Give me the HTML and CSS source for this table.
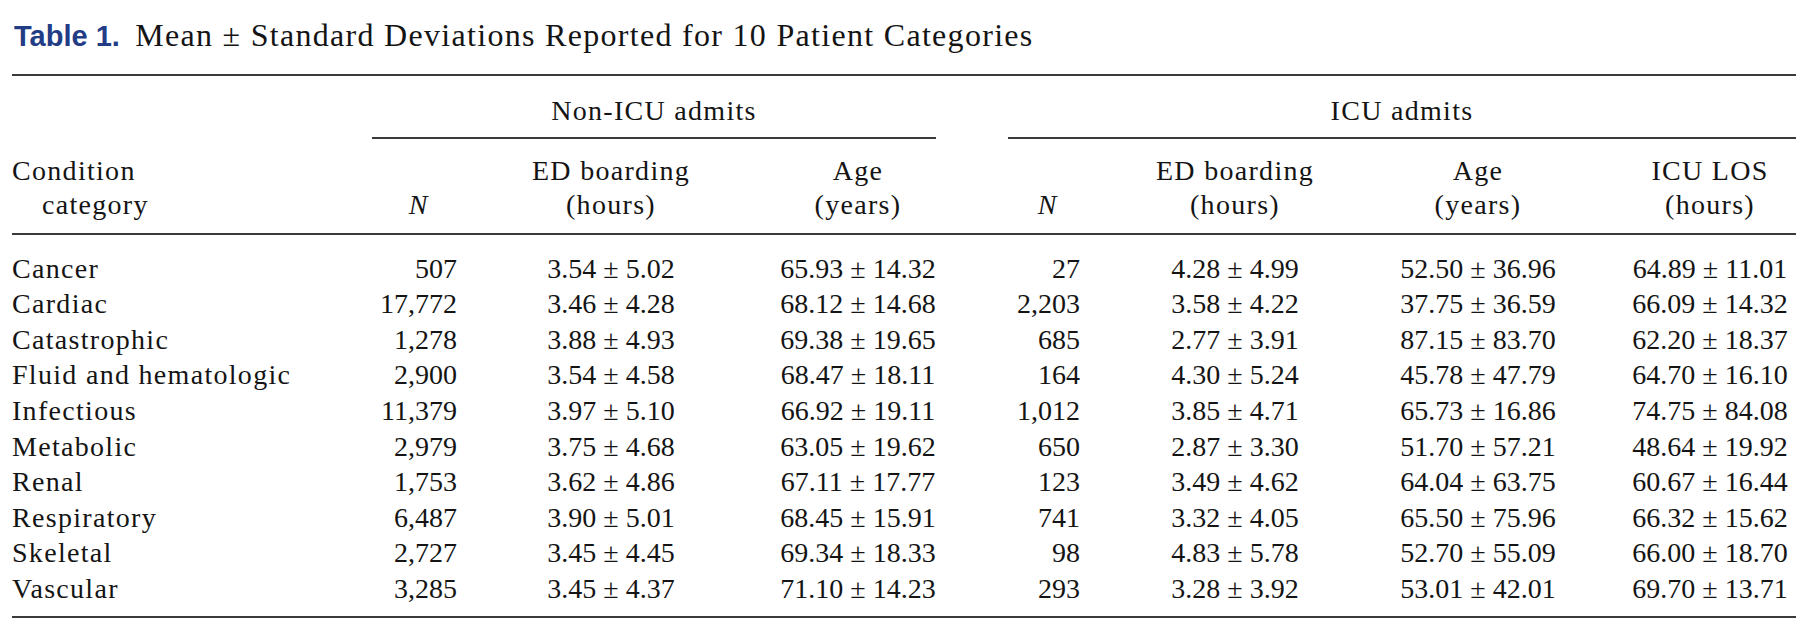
FILE: index.html
```html
<!DOCTYPE html>
<html lang="en">
<head>
<meta charset="utf-8">
<title>Table 1</title>
<link rel="stylesheet" href="styles.css">
</head>
<body>
<div class="page">
  <h1 class="caption"><span class="caption-label">Table 1.</span> Mean ± Standard Deviations Reported for 10 Patient Categories</h1>
  <table class="stats">
    <colgroup>
      <col class="w-label">
      <col class="w-n1">
      <col class="w-ed1">
      <col class="w-age1">
      <col class="w-gap">
      <col class="w-n2">
      <col class="w-ed2">
      <col class="w-age2">
      <col class="w-los">
    </colgroup>
    <thead>
      <tr class="group-row">
        <th class="blank"></th>
        <th class="group" colspan="3">Non-ICU admits</th>
        <th class="blank"></th>
        <th class="group" colspan="4">ICU admits</th>
      </tr>
      <tr class="head-row">
        <th class="label head-label">Condition<br>category</th>
        <th class="head-n"><i>N</i></th>
        <th class="ed1">ED boarding<br>(hours)</th>
        <th>Age<br>(years)</th>
        <th></th>
        <th class="head-n"><i>N</i></th>
        <th>ED boarding<br>(hours)</th>
        <th class="age2">Age<br>(years)</th>
        <th>ICU LOS<br>(hours)</th>
      </tr>
    </thead>
    <tbody>
      <tr><td class="label">Cancer</td><td class="n1">507</td><td class="ed1">3.54 ± 5.02</td><td>65.93 ± 14.32</td><td></td><td class="n2">27</td><td>4.28 ± 4.99</td><td class="age2">52.50 ± 36.96</td><td>64.89 ± 11.01</td></tr>
      <tr><td class="label">Cardiac</td><td class="n1">17,772</td><td class="ed1">3.46 ± 4.28</td><td>68.12 ± 14.68</td><td></td><td class="n2">2,203</td><td>3.58 ± 4.22</td><td class="age2">37.75 ± 36.59</td><td>66.09 ± 14.32</td></tr>
      <tr><td class="label">Catastrophic</td><td class="n1">1,278</td><td class="ed1">3.88 ± 4.93</td><td>69.38 ± 19.65</td><td></td><td class="n2">685</td><td>2.77 ± 3.91</td><td class="age2">87.15 ± 83.70</td><td>62.20 ± 18.37</td></tr>
      <tr><td class="label">Fluid and hematologic</td><td class="n1">2,900</td><td class="ed1">3.54 ± 4.58</td><td>68.47 ± 18.11</td><td></td><td class="n2">164</td><td>4.30 ± 5.24</td><td class="age2">45.78 ± 47.79</td><td>64.70 ± 16.10</td></tr>
      <tr><td class="label">Infectious</td><td class="n1">11,379</td><td class="ed1">3.97 ± 5.10</td><td>66.92 ± 19.11</td><td></td><td class="n2">1,012</td><td>3.85 ± 4.71</td><td class="age2">65.73 ± 16.86</td><td>74.75 ± 84.08</td></tr>
      <tr><td class="label">Metabolic</td><td class="n1">2,979</td><td class="ed1">3.75 ± 4.68</td><td>63.05 ± 19.62</td><td></td><td class="n2">650</td><td>2.87 ± 3.30</td><td class="age2">51.70 ± 57.21</td><td>48.64 ± 19.92</td></tr>
      <tr><td class="label">Renal</td><td class="n1">1,753</td><td class="ed1">3.62 ± 4.86</td><td>67.11 ± 17.77</td><td></td><td class="n2">123</td><td>3.49 ± 4.62</td><td class="age2">64.04 ± 63.75</td><td>60.67 ± 16.44</td></tr>
      <tr><td class="label">Respiratory</td><td class="n1">6,487</td><td class="ed1">3.90 ± 5.01</td><td>68.45 ± 15.91</td><td></td><td class="n2">741</td><td>3.32 ± 4.05</td><td class="age2">65.50 ± 75.96</td><td>66.32 ± 15.62</td></tr>
      <tr><td class="label">Skeletal</td><td class="n1">2,727</td><td class="ed1">3.45 ± 4.45</td><td>69.34 ± 18.33</td><td></td><td class="n2">98</td><td>4.83 ± 5.78</td><td class="age2">52.70 ± 55.09</td><td>66.00 ± 18.70</td></tr>
      <tr><td class="label">Vascular</td><td class="n1">3,285</td><td class="ed1">3.45 ± 4.37</td><td>71.10 ± 14.23</td><td></td><td class="n2">293</td><td>3.28 ± 3.92</td><td class="age2">53.01 ± 42.01</td><td>69.70 ± 13.71</td></tr>
    </tbody>
  </table>
</div>
</body>
</html>
```
FILE: styles.css
```css
html, body {
  margin: 0;
  padding: 0;
  background: #ffffff;
}

.page {
  padding-left: 12px;
  color: #141414;
  font-family: "Liberation Serif", "Times New Roman", serif;
}

.caption {
  margin: 0 0 19px 0;
  padding: 15px 0 0 2px;
  height: 40px;
  box-sizing: content-box;
  font-family: "Liberation Serif", serif;
  font-size: 32px;
  line-height: 40px;
  font-weight: normal;
  letter-spacing: 1.3px;
  white-space: nowrap;
  color: #141414;
}

.caption-label {
  font-family: "Liberation Sans", Arial, sans-serif;
  font-weight: bold;
  font-size: 29px;
  line-height: 1;
  letter-spacing: 0;
  color: #233c86;
  margin-right: 6px;
}

.stats {
  width: 1784px;
  table-layout: fixed;
  border-collapse: separate;
  border-spacing: 0;
  border-top: 2px solid #3a3a3a;
  border-bottom: 2px solid #3a3a3a;
  font-size: 28px;
  line-height: 34px;
  white-space: nowrap;
}

.w-label { width: 360px; }
.w-n1 { width: 92px; }
.w-ed1 { width: 316px; }
.w-age1 { width: 156px; }
.w-gap { width: 72px; }
.w-n2 { width: 78px; }
.w-ed2 { width: 298px; }
.w-age2 { width: 240px; }
.w-los { width: 172px; }

.stats th,
.stats td {
  padding: 0;
  font-weight: normal;
  text-align: center;
}

.stats th {
  letter-spacing: 1.3px;
}

.group-row th {
  padding-top: 17.5px;
  padding-bottom: 9.5px;
}

.group-row .group {
  border-bottom: 2px solid #3a3a3a;
}

.head-row th {
  padding-top: 14.5px;
  padding-bottom: 11.5px;
  vertical-align: bottom;
  border-bottom: 2px solid #3a3a3a;
}

.head-row .head-label {
  text-align: left;
  padding-left: 30px;
  text-indent: -30px;
}

.head-row .head-n i {
  letter-spacing: 0;
}

.stats td {
  line-height: 35.55px;
}

.stats tbody tr:first-child td {
  padding-top: 15.8px;
}

.stats tbody tr:last-child td {
  padding-bottom: 9.7px;
}

.stats .label {
  text-align: left;
  letter-spacing: 1.3px;
}

.stats .n1 {
  text-align: right;
  padding-right: 7px;
}

.stats .n2 {
  text-align: right;
  padding-right: 6px;
}

.stats .ed1 {
  padding-right: 22px;
}

.stats .age2 {
  padding-right: 52px;
}
```
